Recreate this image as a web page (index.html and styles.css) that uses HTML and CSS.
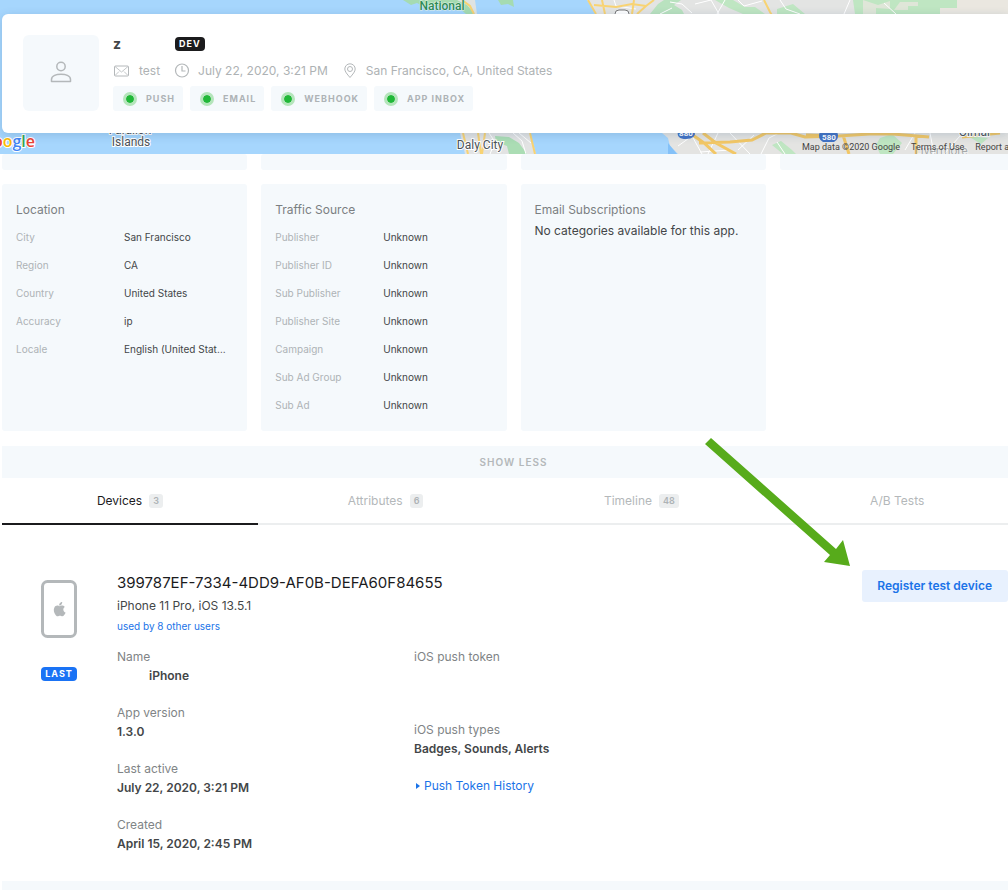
FILE: index.html
```html
<!DOCTYPE html>
<html lang="en">
<head>
<meta charset="utf-8">
<meta name="viewport" content="width=device-width, initial-scale=1">
<title>User profile</title>
<link rel="stylesheet" href="styles.css">
</head>
<body>
<div class="page">
  <header class="hero">
    <svg class="map" width="1400" height="154" viewBox="0 0 1400 154" aria-hidden="true">
      <rect width="1400" height="154" fill="#a6d6fd"/>
      <!-- northern coast -->
      <path d="M403 0l8 5 6-2 6 3h34l9 8h8l-5-14z" fill="#a5dbb1"/>
      <path d="M457 0l10 5 8 9h8l-5-14z" fill="#dfe3e2"/>
      <path d="M462 0l8 6 4 8" fill="none" stroke="#f8d373" stroke-width="2"/>
      <path d="M475 0h8v14h-6z" fill="#a6d6fd"/>
      <path d="M498 0l3 5 7-1 6 3-1-7z" fill="#a5dbb1"/>
      <path d="M587 0l9 14h804V0z" fill="#e3e4e3"/>
      <path d="M650 14l8-10 6-4h17l-7 5 8 5 2 4z" fill="#b9e2bf"/>
      <path d="M715 0h18l12 7 10 0 10 7h-22l-14-6zM777 9l16-5 12 10h-28zM853 0h104v8h-17v6h-85z" fill="#bfe6c2"/>
      <path d="M863 0l15 5 12-4v8l-14-1v6H863zM900 2h18v4h-10v4h-14z" fill="#dfe6d8"/>
      <path d="M957 0h443v14H940V8h17z" fill="#eae7e0"/>
      <path d="M670 2l12 2 10 9M695 4l16-4 8 14M725 0l-8 14M738 0l6 6 18-5M780 0l6 9 14 5M614 0l2 6 20 3M672 8l-12 6M850 0l-6 14M884 3l12 11" fill="none" stroke="#fff" stroke-width="1"/>
      <path d="M588 0l8 14M594 5l22 2 16-3 14 2 8-6M602 0l3 14M634 0l-2 14M646 6l-9 8M764 0l6 12 3 5" fill="none" stroke="#f8d373" stroke-width="2"/>
      <rect x="615" y="10" width="14" height="12" rx="4" fill="#fff" stroke="#777" stroke-width="1"/>
      <!-- southern coast -->
      <path d="M460 133l5 21h71l-6-21z" fill="#e2e3e3"/>
      <path d="M495 136l14 1 10 6 8 11h-18l-2-8-11-4z" fill="#abddb4"/>
      <path d="M463 133l5 21M478 133l3 21M485 133l-3 21M530 133l5 21" fill="none" stroke="#f8d373" stroke-width="2"/>
      <path d="M489 133l6 9-5 12M513 133l9 8 4 13M519 133l12 10" fill="none" stroke="#fff" stroke-width="1"/>
      <path d="M662 133l6 5 2 8 8 8h722v-21z" fill="#e4e4e2"/>
      <path d="M668 143l9 11h-9z" fill="#84c1f8"/>
      <path d="M772 145l9-4 11 9 4 4h-13zM880 138l12-4 10 9-9 11h-13l-4-9zM968 136l20 2-7 6z" fill="#bfe6c2"/>
      <path d="M678 146l14-10 10 18M718 133l-10 21M730 133l20 21M738 150l16-15M761 154l8-16 10-5M785 154l-8-12M905 150l10-17M930 133l4 21M944 154l16-18M700 152l30-2" fill="none" stroke="#fff" stroke-width="1"/>
      <path d="M690 133l14 10 12 11M703 133l13 10 20 11M699 143l31-1 22-2 14-7 25 0 14 4 34-1 30-2 24 0 36 3M806 135l30 1M843 135l6 19M916 135v19M962 137l38-4" fill="none" stroke="#f2c766" stroke-width="3"/>
      <path d="M678 131h17q1 8-9 8t-8-8z" fill="#4373c5"/>
      <path d="M820 131h17q3 8-3 11h-11q-6-3-3-11z" fill="#4373c5"/>
      <g class="map-shield">
        <text x="686" y="136" text-anchor="middle">880</text>
        <text x="829" y="140" text-anchor="middle">580</text>
      </g>
      <g class="map-label">
        <text x="130" y="134" text-anchor="middle">Farallon</text>
        <text x="131" y="146" text-anchor="middle">Islands</text>
        <text x="480" y="149" text-anchor="middle">Daly City</text>
        <text x="975" y="136" text-anchor="middle">Olmar</text>
        <text x="941" y="155" text-anchor="middle" opacity="0.4">Livermore</text>
      </g>
      <text class="map-park" x="442" y="10" text-anchor="middle">National</text>
      <text class="map-logo" x="35" y="147" text-anchor="end"><tspan fill="#4285f4">G</tspan><tspan fill="#ea4335">o</tspan><tspan fill="#fbbc05">o</tspan><tspan fill="#4285f4">g</tspan><tspan fill="#34a853">l</tspan><tspan fill="#ea4335">e</tspan></text>
    </svg>
    <section class="profile">
      <div class="avatar">
        <svg width="22" height="24" viewBox="0 0 22 24" fill="none" stroke="#b4b8ba" stroke-width="1.500"><circle cx="11" cy="5.500" r="4.200"/><path d="M1.500 20.500v-2c0-3.800 5-5.300 9.500-5.300s9.500 1.500 9.500 5.300v2z" stroke-linejoin="round"/></svg>
      </div>
      <div class="summary">
        <div class="name-row"><h1 class="name">z</h1><span class="tag tag-dev">DEV</span></div>
        <ul class="facts">
          <li class="fact fact-mail"><svg width="16" height="16" viewBox="0 0 16 16" fill="none" stroke="#b4b8ba"><rect x="1.500" y="3" width="14" height="10" rx="1"/><path d="M2 3.500L8.500 9 15 3.500M2 12.500L6 8.500M15 12.500l-4-4" stroke-width=".8"/></svg>test</li>
          <li class="fact"><svg width="16" height="16" viewBox="0 0 16 16" fill="none" stroke="#b4b8ba" stroke-width="1.200"><circle cx="8" cy="7.500" r="6.500"/><path d="M8 3v5h3.500"/></svg>July 22, 2020, 3:21 PM</li>
          <li class="fact"><svg width="16" height="16" viewBox="0 0 16 16" fill="none" stroke="#b4b8ba"><path d="M8 14.500C5 11 2.800 8.500 2.800 6a5.200 5.200 0 0 1 10.400 0C13.200 8.500 11 11 8 14.500z"/><circle cx="8" cy="6" r="2.500"/></svg>San Francisco, CA, United States</li>
        </ul>
        <ul class="channels">
          <li class="channel">PUSH</li>
          <li class="channel">EMAIL</li>
          <li class="channel">WEBHOOK</li>
          <li class="channel">APP INBOX</li>
        </ul>
      </div>
    </section>
    <nav class="map-credits"><span>Map data ©2020 Google</span><a href="#">Terms of Use</a><a href="#">Report a map error</a></nav>
  </header>

  <main class="content">
    <div class="cards cards-above">
      <div class="card"></div><div class="card"></div><div class="card"></div><div class="card"></div>
    </div>
    <div class="cards">
      <section class="card">
        <h2 class="card-title">Location</h2>
        <dl class="pairs">
          <dt>City</dt><dd>San Francisco</dd>
          <dt>Region</dt><dd>CA</dd>
          <dt>Country</dt><dd>United States</dd>
          <dt>Accuracy</dt><dd>ip</dd>
          <dt>Locale</dt><dd>English (United Stat…</dd>
        </dl>
      </section>
      <section class="card">
        <h2 class="card-title">Traffic Source</h2>
        <dl class="pairs">
          <dt>Publisher</dt><dd>Unknown</dd>
          <dt>Publisher ID</dt><dd>Unknown</dd>
          <dt>Sub Publisher</dt><dd>Unknown</dd>
          <dt>Publisher Site</dt><dd>Unknown</dd>
          <dt>Campaign</dt><dd>Unknown</dd>
          <dt>Sub Ad Group</dt><dd>Unknown</dd>
          <dt>Sub Ad</dt><dd>Unknown</dd>
        </dl>
      </section>
      <section class="card">
        <h2 class="card-title">Email Subscriptions</h2>
        <p class="card-note">No categories available for this app.</p>
      </section>
    </div>
    <button class="show-less" type="button">SHOW LESS</button>

    <nav class="tabs">
      <a class="tab tab-active" href="#">Devices<span class="count">3</span></a>
      <a class="tab" href="#">Attributes<span class="count">6</span></a>
      <a class="tab" href="#">Timeline<span class="count">48</span></a>
      <a class="tab" href="#">A/B Tests</a>
    </nav>

    <section class="device">
      <div class="device-side">
        <svg width="36" height="58" viewBox="0 0 36 58"><rect x="1.500" y="1.500" width="33" height="55" rx="5" fill="#fff" stroke="#b4b8ba" stroke-width="3"/><path d="M22.300 29.500c0-1.700 1.300-2.500 1.400-2.600-.8-1.200-2-1.300-2.500-1.300-1.100-.1-2.100.6-2.600.6s-1.400-.6-2.300-.6c-1.200 0-2.300.7-2.900 1.800-1.300 2.200-.3 5.400.9 7.100.6.900 1.300 1.800 2.300 1.800.9 0 1.300-.6 2.400-.6s1.400.6 2.400.6c1 0 1.600-.9 2.200-1.700.7-1 1-2 1-2-.1 0-2.300-.8-2.300-3.100zM20.400 24.400c.5-.6.9-1.500.8-2.400-.8 0-1.700.5-2.200 1.100-.5.600-.9 1.500-.8 2.300.8.100 1.700-.4 2.200-1z" fill="#b4b8ba"/></svg>
        <span class="tag tag-last">LAST</span>
      </div>
      <div class="device-main">
        <h2 class="device-id">399787EF-7334-4DD9-AF0B-DEFA60F84655</h2>
        <p class="device-model">iPhone 11 Pro, iOS 13.5.1</p>
        <a class="device-users" href="#">used by 8 other users</a>
        <div class="details">
          <dl class="detail-col">
            <div class="detail"><dt>Name</dt><dd class="device-name">iPhone</dd></div>
            <div class="detail"><dt>App version</dt><dd>1.3.0</dd></div>
            <div class="detail"><dt>Last active</dt><dd>July 22, 2020, 3:21 PM</dd></div>
            <div class="detail"><dt>Created</dt><dd>April 15, 2020, 2:45 PM</dd></div>
          </dl>
          <div class="detail-col">
            <dl class="push">
              <div class="detail"><dt>iOS push token</dt><dd></dd></div>
              <div class="detail"><dt>iOS push types</dt><dd>Badges, Sounds, Alerts</dd></div>
            </dl>
            <a class="history" href="#"><svg width="4" height="8" viewBox="0 0 4 8"><path d="M0 1l4 3-4 3z" fill="#1a73e8"/></svg>Push Token History</a>
          </div>
        </div>
      </div>
      <button class="register" type="button">Register test device</button>
      <svg class="pointer" width="146" height="130" viewBox="0 0 146 130" aria-hidden="true"><path d="M7 1l125 111 7-9 7 26-26-4 6-7L1 7z" fill="#57ab1b"/></svg>
    </section>
    <div class="next-band"></div>
  </main>
</div>
</body>
</html>
```
FILE: styles.css
```css
* { box-sizing: border-box; }
body, h1, h2, p, ul, dl, dd { margin: 0; padding: 0; }
ul { list-style: none; }
a { color: inherit; text-decoration: none; }
button { border: 0; font: inherit; cursor: pointer; }
svg { display: block; flex: none; }

body {
  background: #fff;
  color: #434648;
  font: 12px/20px Inter, "Liberation Sans", sans-serif;
}
.page { overflow: hidden; }

.hero {
  position: relative;
  overflow: hidden;
  padding: 14px 0 21px 2px;
  background: #e4e4e2;
}
.map { position: absolute; left: 0; top: 0; }
.map text { font-family: Roboto, sans-serif; }
.map-label text { font-size: 12px; fill: #4b5358; stroke: #fff; stroke-width: 2px; paint-order: stroke; }
.map-shield text { font-size: 8px; font-weight: 700; fill: #fff; }
.map .map-park { font-size: 12px; font-weight: 500; fill: #2f8a58; stroke: #e6f4ea; stroke-width: 1px; paint-order: stroke; }
.map .map-logo { font-family: "Open Sans", sans-serif; font-size: 16px; font-weight: 600; stroke: #fff; stroke-width: 2px; paint-order: stroke; }
.map-credits {
  position: absolute;
  left: 802px;
  bottom: 0;
  display: flex;
  gap: 11px;
  font: 9px/14px Roboto, sans-serif;
  white-space: nowrap;
  color: #444;
}

.profile {
  position: relative;
  display: flex;
  gap: 14px;
  padding: 21px 21px 22px;
  background: #fff;
  border-radius: 6px 0 0 6px;
  box-shadow: 0 2px 10px rgba(40, 80, 120, 0.2);
}
.avatar {
  display: flex;
  align-items: center;
  justify-content: center;
  flex: none;
  width: 76px;
  height: 76px;
  background: #f5f9fc;
  border-radius: 6px;
}
.name-row { display: flex; align-items: center; height: 18px; }
.name { width: 62px; font-size: 14px; line-height: 20px; }
.tag {
  padding: 0 4px;
  border-radius: 4px;
  font-size: 9px;
  line-height: 14px;
  font-weight: 700;
  letter-spacing: 1px;
  color: #fff;
}
.tag-dev { background: #1b1b1d; }
.tag-last { background: #1a73f5; }
.facts { display: flex; gap: 14px; padding-top: 8px; color: #aeb2b4; white-space: nowrap; }
.fact { display: flex; align-items: center; gap: 8px; }
.fact-mail { gap: 10px; }
.channels { display: flex; gap: 7px; padding-top: 5px; white-space: nowrap; }
.channel {
  display: flex;
  align-items: center;
  gap: 9px;
  padding: 0 8px 0 10px;
  border-radius: 3px;
  background: #f5f9fc;
  color: #aeb3b6;
  font-size: 9px;
  line-height: 25px;
  font-weight: 700;
  letter-spacing: 1px;
}
.channel::before {
  content: "";
  width: 8px;
  height: 8px;
  border: 3px solid #b5e5bb;
  border-radius: 50%;
  background: #21b838;
  background-clip: padding-box;
}

/* The content column runs past the right edge of the window. */
.content { margin: 0 -17px 0 2px; }
.cards { display: grid; grid-template-columns: repeat(4, 1fr); gap: 14px; padding-bottom: 15px; }
.card { padding: 14px 14px 12px; border-radius: 3px; background: #f5f9fc; min-width: 0; }
.cards-above { padding-bottom: 14px; }
.cards-above .card { padding: 0; height: 16px; }
.card-title { font-size: 12px; line-height: 24px; font-weight: 400; color: #7b7f82; }
.card-note { line-height: 18px; }
.pairs {
  display: grid;
  grid-template-columns: 108px 1fr;
  padding-top: 1px;
  font-size: 10px;
  line-height: 28px;
}
.pairs dt { color: #aeb3b6; }
.pairs dd { overflow: hidden; text-overflow: ellipsis; white-space: nowrap; }
.show-less {
  display: block;
  width: 100%;
  background: #f5f9fc;
  color: #b4b8ba;
  font-size: 10px;
  line-height: 32px;
  padding: 0;
  font-weight: 600;
  letter-spacing: 1px;
}

.tabs { display: grid; grid-template-columns: repeat(4, 1fr); }
.tab {
  display: flex;
  justify-content: center;
  align-items: center;
  gap: 7px;
  height: 47px;
  padding-top: 1px;
  border-bottom: 2px solid #eceeef;
  color: #b4b8ba;
}
.tab-active { color: #1b1b1d; border-color: #1b1b1d; }
.count {
  padding: 0 4px;
  border-radius: 3px;
  background: #eceeef;
  color: #aeb3b6;
  font-size: 9px;
  line-height: 14px;
  font-weight: 600;
}

.device { position: relative; display: flex; gap: 1px; padding: 45px 17px 28px 0; }
.device-side { display: flex; flex-direction: column; align-items: center; gap: 29px; width: 114px; padding-top: 10px; }
.device-main { flex: 1; }
.device-id { font-size: 15px; line-height: 26px; font-weight: 400; color: #1b1b1d; }
.device-model { line-height: 20px; }
.device-users { display: block; font-size: 10px; line-height: 20px; color: #1a73e8; }
.details { display: grid; grid-template-columns: 297px 1fr; padding-top: 11px; }
.detail-col { display: flex; flex-direction: column; gap: 18px; }
.detail { line-height: 19px; }
.detail dt { color: #808486; }
.detail dd { font-weight: 600; }
.detail .device-name { padding-left: 32px; }
.push { display: flex; flex-direction: column; gap: 54px; }
.history { display: flex; align-items: center; gap: 4px; padding-left: 2px; line-height: 19px; color: #1a73e8; }
.register {
  align-self: flex-start;
  padding: 0 16px 0 15px;
  border-radius: 3px;
  background: #e8f1fe;
  color: #1a73e8;
  line-height: 32px;
  font-weight: 600;
}
.pointer { position: absolute; right: 175px; top: -88px; }
.next-band { height: 9px; background: #f5f9fc; }
```
